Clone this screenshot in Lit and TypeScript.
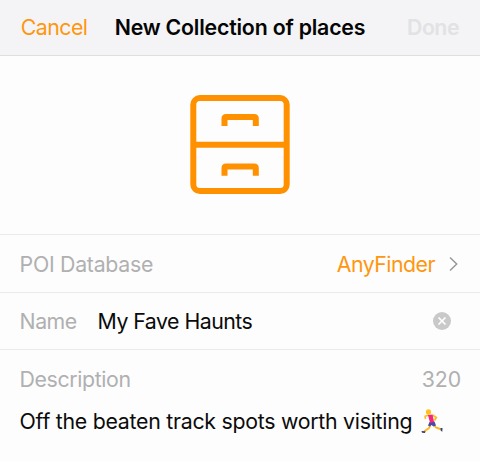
import { LitElement, html, css, svg } from "lit";
import { customElement } from "lit/decorators.js";

const drawers = svg`
  <g fill="none" stroke="#ff9000" stroke-width="6">
    <rect x="3.300" y="3.100" width="93.400" height="93" rx="6.500" />
    <path d="M3 49.700H97" />
    <path d="M34.500 31V23.500Q34.500 21.900 36.100 21.900H64.200Q65.800 21.900 65.800 23.500V31" />
    <path d="M34.500 80.700V73.200Q34.500 71.600 36.100 71.600H64.200Q65.800 71.600 65.800 73.200V80.700" />
  </g>`;

@customElement("app-root")
export class AppRoot extends LitElement {
  static styles = css`
    :host {
      display: flex;
      flex-direction: column;
      height: 462px;
      box-sizing: border-box;
      overflow: hidden;
      background: #fdfdfd;
      color: #0b0b0b;
      font: 400 21.3px/26px Inter, "Liberation Sans", sans-serif;
      white-space: nowrap;
    }
    header {
      display: flex;
      align-items: center;
      box-sizing: border-box;
      height: 56px;
      padding: 0 21px 2px 20.7px;
      background: #f4f4f6;
      border-bottom: 1px solid #dededf;
    }
    .accent { color: #ff960f; }
    .cancel { width: 94px; letter-spacing: -0.5px; }
    .title { font-weight: 600; color: #050505; letter-spacing: -0.2px; }
    .done { margin-left: auto; font-weight: 600; color: #e2e2e4; letter-spacing: -0.5px; }
    .hero {
      display: flex;
      justify-content: center;
      box-sizing: border-box;
      height: 179px;
      padding-top: 39px;
      border-bottom: 1px solid #ebebeb;
    }
    .row {
      display: flex;
      align-items: center;
      box-sizing: border-box;
      height: 58px;
      padding: 0 20px 0 19.6px;
      border-bottom: 1px solid #ebebeb;
    }
    .row.name { height: 57px; }
    .row.desc { border: 0; height: 58px; }
    .label { color: #b0b0b1; }
    .poi { letter-spacing: -0.28px; }
    .nm { width: 78px; letter-spacing: -0.5px; }
    .dl { letter-spacing: -0.38px; }
    .count { letter-spacing: -0.1px; margin-right: -1px; }
    .push { margin-left: auto; }
    .value { letter-spacing: -0.52px; }
    .finder { letter-spacing: -0.52px; }
    .body { letter-spacing: -0.26px; }
    .chevron { margin: 0 1px 0 13px; }
    .clear { margin: 0 9px 0 auto; }
    .text { display: flex; align-items: center; padding: 0 19.6px; height: 26px; }
    .runner { margin-left: 9px; }
  `;

  render() {
    return html`
      <header>
        <span class="accent cancel">Cancel</span>
        <span class="title">New Collection of places</span>
        <span class="done">Done</span>
      </header>
      <div class="hero">
        <svg width="100" height="100" viewBox="0 0 100 100">${drawers}</svg>
      </div>
      <div class="row">
        <span class="label poi">POI Database</span>
        <span class="accent push finder">AnyFinder</span>
        <svg class="chevron" width="11" height="16" viewBox="0 0 11 16">
          <path d="M2 1.500L8.700 8L2 14.500" fill="none" stroke="#959596" stroke-width="1.400" />
        </svg>
      </div>
      <div class="row name">
        <span class="label nm">Name</span>
        <span class="value">My Fave Haunts</span>
        <svg class="clear" width="18" height="18" viewBox="0 0 18 18">
          <circle cx="9" cy="9" r="9" fill="#c9c9ca" />
          <path d="M5.500 5.500L12.500 12.500M12.500 5.500L5.500 12.500" stroke="#fff" stroke-width="1.700" />
        </svg>
      </div>
      <div class="row desc">
        <span class="label dl">Description</span>
        <span class="label push count">320</span>
      </div>
      <div class="text">
        <span class="body">Off the beaten track spots worth visiting</span>
        <svg class="runner" width="23" height="25" viewBox="0 0 23 25">
          <path d="M8 6L4 7.200L4.500 10" fill="none" stroke="#ffb91c" stroke-width="1.500" />
          <path d="M11.500 6L15.300 8.500L13.500 11.500" fill="none" stroke="#ffb91c" stroke-width="1.800" />
          <path d="M9.500 16L8 19L3 22.500M13 16L15 18.500L20.500 20.500" fill="none" stroke="#ffb91c" stroke-width="1.900" />
          <path d="M8.500 13L13.500 12.500L15 16.500L12.500 17.500L10.500 16L8.800 17.500L7 16.500Z" fill="#4b4ba5" />
          <path d="M7 6L11.500 5.500L13 13L9 13.800Z" fill="#f5267b" />
          <ellipse cx="7.500" cy="3" rx="2.600" ry="2.800" fill="#ffc21c" />
          <path d="M0.500 22L4.500 22.200L4 24L1 23.800ZM19.500 19L21.500 19L21.300 22.800L19.800 21.800Z" fill="#343f80" />
        </svg>
      </div>
    `;
  }
}
